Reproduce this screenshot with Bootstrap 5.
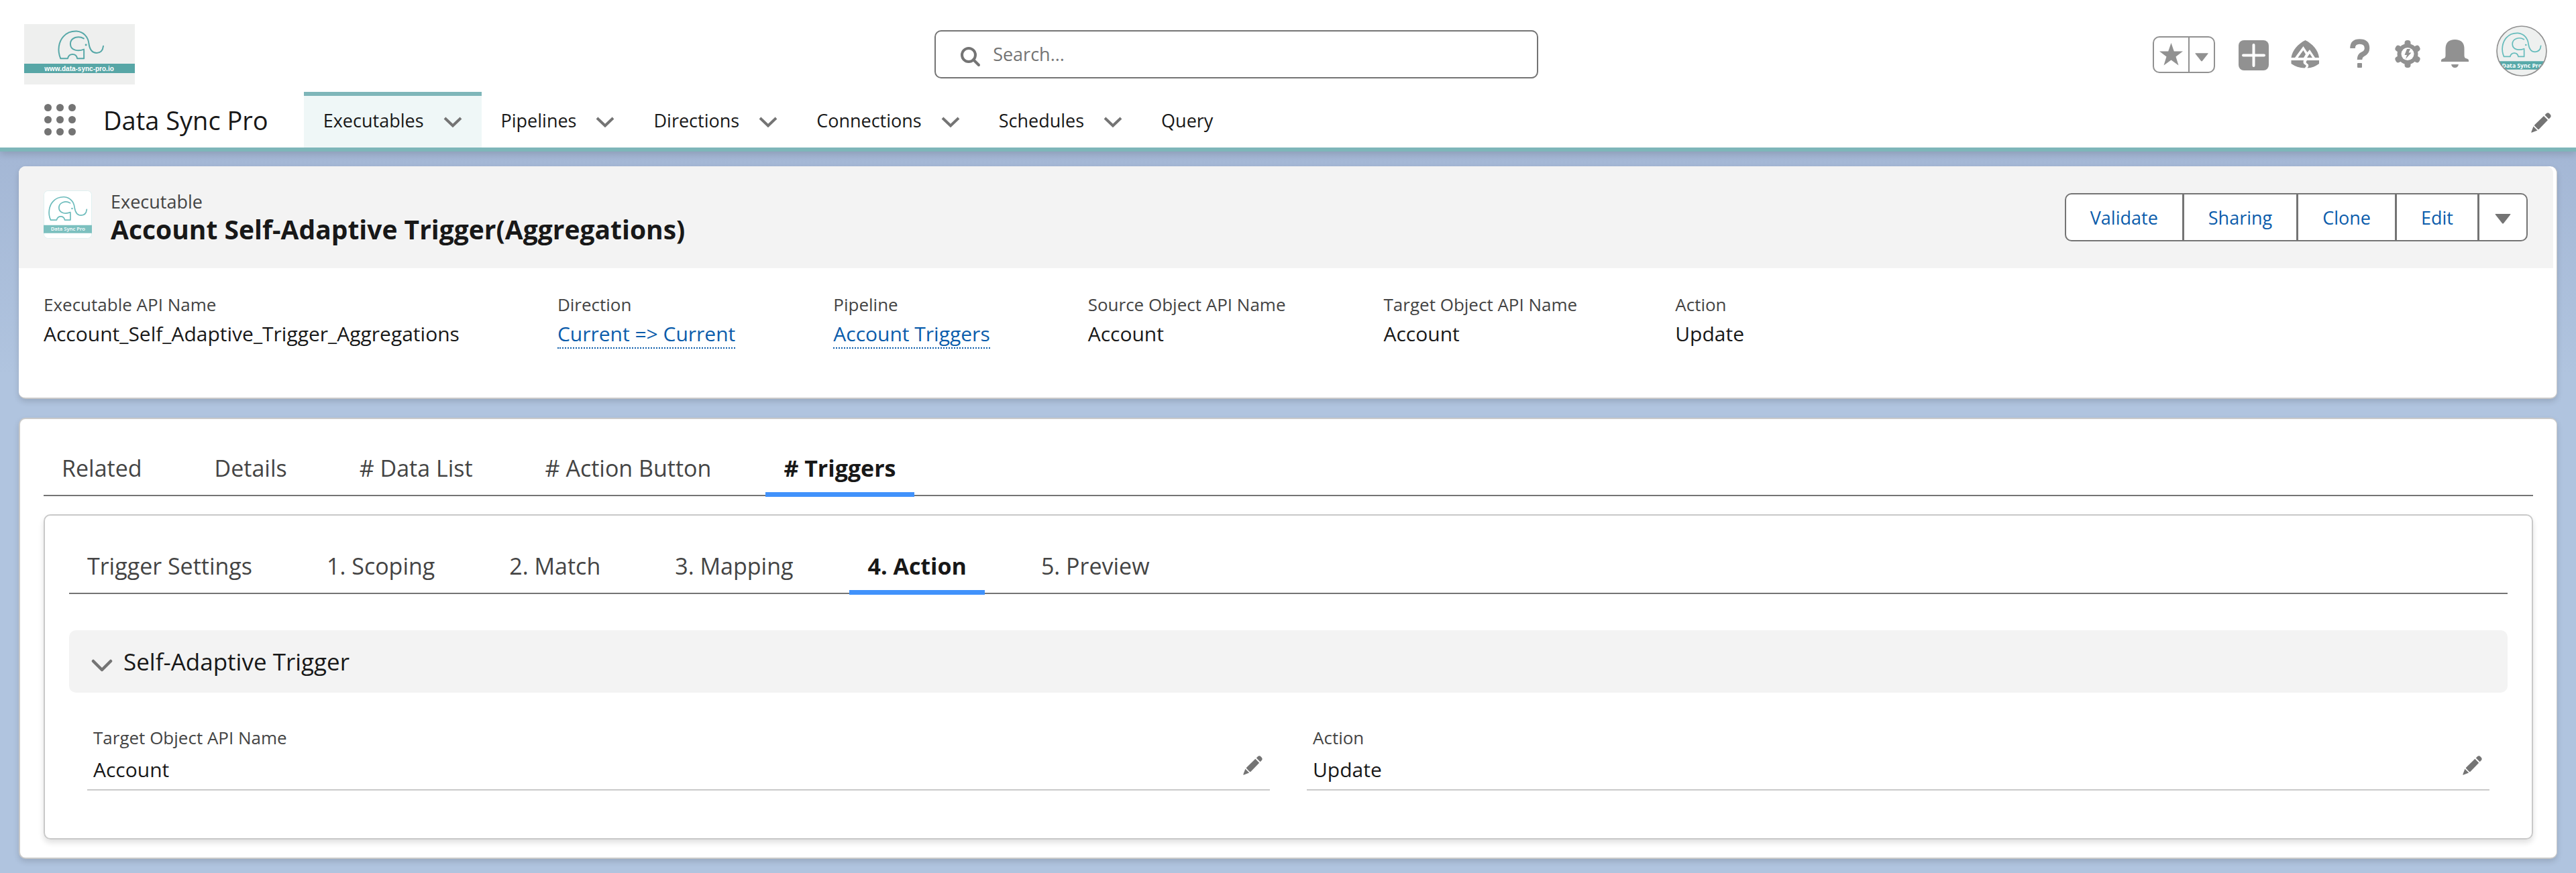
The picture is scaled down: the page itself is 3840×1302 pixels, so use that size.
<!DOCTYPE html>
<html lang="en">
<head>
<meta charset="utf-8">
<meta name="viewport" content="width=device-width, initial-scale=1">
<title>Account Self-Adaptive Trigger(Aggregations) | Data Sync Pro</title>
<link rel="stylesheet" href="https://cdn.jsdelivr.net/npm/bootstrap@5.3.0/dist/css/bootstrap.min.css">
<style>
:root{--ink:#181818;--soft:#444;--grey:#747474;--icon:#919191;--line:#c9c9c9;--teal:#7eb6b9;--link-blue:#0b5cab;--pane:#f3f3f3}
body{font-family:"Open Sans","Noto Sans",sans-serif;font-size:30px;line-height:36px;color:var(--ink);background:linear-gradient(#a4b7d5 226px,#b0c4df 560px) #b0c4df;min-height:100vh}
button{color:inherit}
svg{display:block;flex:none}
.plain{background:none;border:0;padding:0}
/* global header */
.site-head{background:#fff;border-bottom:6px solid var(--teal);box-shadow:0 4px 10px rgba(0,0,0,.14);position:relative}
.head-top{display:grid;grid-template-columns:37fr 900px 41fr;height:137px;padding:25px 43px 0 36px}
.search-box{height:72px;border:2px solid var(--grey);border-radius:10px;padding:0 37px;gap:18px;color:var(--grey)}
.search-box input{border:0;outline:0;background:none;padding:0;font-size:27px;color:var(--ink)}
.search-box input::placeholder{color:var(--grey);opacity:1}
.head-tools{color:var(--icon)}
.fav-group{height:55px;border:2px solid var(--icon);border-radius:10px;margin-right:34px}
.fav-group button{padding:0 8px}
.fav-group button+button{border-left:2px solid var(--icon)}
.avatar{margin:0 0 10px 40px}
.app-bar{height:83px;padding:0 37px 0 66px}
.app-name{font-size:38px;margin:0 53px 0 41px}
.app-item{padding:0 29px;gap:29px;border-top:6px solid transparent;border-bottom:4px solid transparent;font-size:27px}
.app-item a{color:inherit;text-decoration:none}
.app-item.current{background:#eff7f7;border-top-color:var(--teal);border-bottom-color:#eff7f7}
.chev{color:var(--grey)}
/* cards */
.page-body{padding:22px 28px 20px;display:grid;gap:28px}
.panel-card{background:#fff;border:1px solid var(--line);border-width:0 1px 2px 0;border-radius:10px;box-shadow:0 4px 8px rgba(0,0,0,.14)}
.rec-head{background:var(--pane);height:152px;padding:0 38px 0 37px;margin-right:5px;border-radius:10px 10px 0 0}
.rec-title{font-size:39px;line-height:46px;font-weight:700;margin:0}
.rec-kind{font-size:27px;color:var(--soft)}
.rec-icon{margin-bottom:8px}
.rec-actions .btn{font-size:27px;line-height:36px;padding:17px 36px 15px;border:2px solid var(--grey);border-radius:10px;background:#fff;color:var(--link-blue);--bs-btn-hover-color:var(--link-blue)}
.rec-actions .btn:not(:first-child){margin-left:-2px}
.rec-actions .btn:last-child{padding:20px 23px 16px;color:var(--grey)}
.facts{padding:36px 37px 69px;gap:146px}
dl,dt,dd{margin:0;font-weight:400}
dt{font-size:26px;line-height:36px;color:var(--soft)}
dd{line-height:52px}
dd a{color:var(--link-blue);text-decoration:none;border-bottom:2px dotted var(--link-blue)}
/* tabs */
.tab-card{border-width:2px 1px 2px 2px;padding:32px 35px 27px}
.tab-line{border-bottom:2px solid var(--grey);gap:54px}
.tab-line .nav-link{font-size:34px;line-height:48px;color:var(--soft);padding:17px 27px 12px;border:0;border-bottom:7px solid transparent;border-radius:0;margin-bottom:-3px;background:none}
.tab-line .nav-link.active{color:var(--ink);font-weight:700;border-bottom-color:#4192fb}
.inner-box{margin-top:27px;border:2px solid var(--line);border-radius:10px;padding:34px 36px 71px;box-shadow:0 5px 8px rgba(0,0,0,.12)}
.inner-box .tab-line{gap:57px}
.fold{margin-top:54px;height:93px;background:var(--pane);border-radius:10px;padding:0 33px;gap:16px;font-size:35px}
.fold .chev{margin-top:12px}
.detail-grid{padding:49px 27px 0}
.detail-grid .row{--bs-gutter-x:55px}
.detail-item{border-bottom:2px solid var(--line);padding:0 11px 0 9px}
.detail-item dd{line-height:59px}
.detail-item .plain{margin-top:24px}
.pencil{color:var(--grey)}
</style>
</head>
<body>
<svg width="0" height="0" class="position-absolute" aria-hidden="true">
  <symbol id="elephant" viewBox="164 42 214 136">
    <g fill="none" stroke="currentColor" stroke-width="6" stroke-linecap="round" stroke-linejoin="round">
      <path d="M285 134V171H255C250 146 218 146 212 171H180C164 134 172 95 193 72C214 49 238 48 252 48.500C285 51 304 76 307 104C311 132 324 146 342 146C360 146 370 133 372 115"/>
      <path d="M284 81C261 67 224 76 224 106C225 136 260 140 285 130"/>
    </g>
    <circle cx="294" cy="110" r="4.500" fill="currentColor"/>
  </symbol>
  <symbol id="chevron" viewBox="0 0 28 16"><path d="M2 2L14 13.500L26 2" fill="none" stroke="currentColor" stroke-width="4"/></symbol>
  <symbol id="chevron-lg" viewBox="0 0 32 20"><path d="M3 3L16 16L29 3" fill="none" stroke="currentColor" stroke-width="4.500" stroke-linecap="round" stroke-linejoin="round"/></symbol>
  <symbol id="caret" viewBox="0 0 22 14"><path d="M1 0H21Q22 0 21.500 1L12 13Q11 14 10 13L.5 1Q0 0 1 0Z" fill="currentColor"/></symbol>
  <symbol id="pencil" viewBox="0 0 30 30"><path d="M19 5L25 11L12 24.500Q11 25.500 10 24.500L5.500 20Q4.500 19 5.500 18ZM20.500 3.500L23 1Q25.500-.5 27.500 1.500L28.500 2.500Q30.500 4.500 29 7L26.500 9.500ZM3.500 20.500L9.500 26.500L1.500 29.500Q0 30 .5 28.500Z" fill="currentColor"/></symbol>
</svg>

<header class="site-head">
  <div class="head-top align-items-center">
    <a href="#" aria-label="Data Sync Pro home">
      <svg width="165" height="90" viewBox="0 0 165 90"><rect width="165" height="90" fill="#eeefee"/><use href="#elephant" x="49" y="8" width="71" height="46" color="#57a8a8"/><rect y="59" width="165" height="14" fill="#57a6a6"/><text x="82" y="70" text-anchor="middle" font-family="Liberation Sans, sans-serif" font-size="10" font-weight="700" fill="#fff">www.data-sync-pro.io</text></svg>
    </a>
    <label class="search-box d-flex align-items-center">
      <svg width="30" height="30" viewBox="0 0 30 30" class="mt-2" aria-hidden="true"><circle cx="12" cy="12" r="10" fill="none" stroke="currentColor" stroke-width="4"/><path d="M19 19L27 27" stroke="currentColor" stroke-width="4" stroke-linecap="round"/></svg>
      <input type="search" class="flex-grow-1" placeholder="Search..." aria-label="Search">
    </label>
    <div class="head-tools d-flex align-items-center justify-content-end">
      <div class="fav-group d-flex">
        <button class="plain" aria-label="Favorite"><svg width="35" height="34" viewBox="0 0 35 34"><path d="M17.500 0L21.800 12.500H35L24.500 20.500L28.500 33.500L17.500 25.500L6.500 33.500L10.500 20.500L0 12.500H13.200Z" fill="currentColor"/></svg></button>
        <button class="plain pt-2" aria-label="Favorites list"><svg width="20" height="13"><use href="#caret"/></svg></button>
      </div>
      <button class="plain" aria-label="Create"><svg width="47" height="52" viewBox="0 0 47 52"><rect x="1" y="5" width="45" height="45" rx="8" fill="currentColor"/><path d="M23.500 12V43M8 27.500H39" stroke="#fff" stroke-width="4" stroke-linecap="round"/></svg></button>
      <button class="plain ms-3 ps-3" aria-label="Guidance"><svg width="43" height="52" viewBox="0 0 43 52"><path d="M21.500 5C32 10 41 20 42 31H36L28 19L24.500 23L18.500 14L6 31H0.500C2 20 11 10 21.500 5ZM18.500 20L22 26L19 31H10.500ZM28 25L32 31H24ZM0.500 35H19Q17 40 22 42Q24 43 20.500 46.500Q9 46 0.500 40ZM24 35H42V40Q34 46 24.500 46.500Q28 42 24.500 40Q21 38 24 35Z" fill="currentColor"/></svg></button>
      <button class="plain ms-3 ps-4" aria-label="Help"><svg width="38" height="52" viewBox="0 0 38 52"><path d="M9 17Q9 7 19.500 7Q30.500 7 30.500 17Q30.500 23 24 26Q19.500 28 19.500 34" fill="none" stroke="currentColor" stroke-width="7.500"/><rect x="16" y="39" width="7" height="7" rx="1" fill="currentColor"/></svg></button>
      <button class="plain ms-3 ps-3" aria-label="Setup"><svg width="42" height="52" viewBox="0 0 42 52"><g fill="currentColor"><circle cx="21" cy="25.500" r="15.500"/><rect x="16.500" y="5" width="9" height="41" rx="4"/><rect x="16.500" y="5" width="9" height="41" rx="4" transform="rotate(60 21 25.500)"/><rect x="16.500" y="5" width="9" height="41" rx="4" transform="rotate(120 21 25.500)"/></g><circle cx="21" cy="25.500" r="9.500" fill="#fff"/><path d="M20 18H25L22.500 23.500H26.500L18 33L20 27H16.500Z" fill="currentColor"/></svg></button>
      <button class="plain ms-4 ps-1" aria-label="Notifications"><svg width="43" height="52" viewBox="0 0 43 52"><path d="M1 37V35Q1 33 3.500 32.500Q7.500 32 7.500 28V18Q7.500 4 21.500 4Q35.500 4 35.500 18V28Q35.500 32 39.500 32.500Q42 33 42 35V37ZM16 41H27Q26 46 21.500 46Q17 46 16 41Z" fill="currentColor"/></svg></button>
      <button class="plain avatar" aria-label="View profile"><svg width="76" height="76" viewBox="693 23 228 228"><defs><clipPath id="disc"><circle cx="807" cy="137" r="111"/></clipPath></defs><g clip-path="url(#disc)"><path d="M693 23h228v228h-228z" fill="#eef0ef"/><use href="#elephant" x="714" y="50" width="184" height="120" color="#66bcbc"/><path d="M693 183h228v37h-228z" fill="#57a9a9"/><text x="808" y="211" text-anchor="middle" font-size="26" font-weight="700" fill="#fff">Data Sync Pro</text></g><circle cx="807" cy="137" r="111" fill="none" stroke="#919191" stroke-width="5"/></svg></button>
    </div>
  </div>
  <nav class="app-bar d-flex align-items-stretch" aria-label="App">
    <button class="plain" aria-label="App launcher"><svg width="47" height="47" viewBox="0 0 47 47" fill="#747474"><circle cx="5.500" cy="5.500" r="5.500"/><circle cx="23.500" cy="5.500" r="5.500"/><circle cx="41.500" cy="5.500" r="5.500"/><circle cx="5.500" cy="23.500" r="5.500"/><circle cx="23.500" cy="23.500" r="5.500"/><circle cx="41.500" cy="23.500" r="5.500"/><circle cx="5.500" cy="41.500" r="5.500"/><circle cx="23.500" cy="41.500" r="5.500"/><circle cx="41.500" cy="41.500" r="5.500"/></svg></button>
    <span class="app-name align-self-center">Data Sync Pro</span>
    <div class="app-item current d-flex align-items-center"><a href="#" aria-current="page">Executables</a><button class="plain chev pt-1" aria-label="Executables list"><svg width="28" height="16"><use href="#chevron"/></svg></button></div>
    <div class="app-item d-flex align-items-center"><a href="#">Pipelines</a><button class="plain chev pt-1" aria-label="Pipelines list"><svg width="28" height="16"><use href="#chevron"/></svg></button></div>
    <div class="app-item d-flex align-items-center"><a href="#">Directions</a><button class="plain chev pt-1" aria-label="Directions list"><svg width="28" height="16"><use href="#chevron"/></svg></button></div>
    <div class="app-item d-flex align-items-center"><a href="#">Connections</a><button class="plain chev pt-1" aria-label="Connections list"><svg width="28" height="16"><use href="#chevron"/></svg></button></div>
    <div class="app-item d-flex align-items-center"><a href="#">Schedules</a><button class="plain chev pt-1" aria-label="Schedules list"><svg width="28" height="16"><use href="#chevron"/></svg></button></div>
    <div class="app-item d-flex align-items-center"><a href="#">Query</a></div>
    <button class="plain pencil ms-auto pt-2" aria-label="Edit navigation"><svg width="30" height="30"><use href="#pencil"/></svg></button>
  </nav>
</header>

<main class="page-body">
  <section class="panel-card">
    <div class="rec-head d-flex align-items-center">
      <svg class="rec-icon me-4" width="72" height="72" viewBox="12 12 216 216" aria-hidden="true"><rect x="13.500" y="13.500" width="213" height="213" rx="18" fill="#fff" stroke="#dff0f0" stroke-width="3"/><use href="#elephant" x="30" y="34" width="180" height="118" color="#6dbcbc"/><path d="M12 167h216v36h-216z" fill="#7cc0bf"/><text x="121" y="193" text-anchor="middle" font-size="23" font-weight="600" fill="#fff">Data Sync Pro</text></svg>
      <div class="ps-1">
        <div class="rec-kind">Executable</div>
        <h1 class="rec-title">Account Self-Adaptive Trigger(Aggregations)</h1>
      </div>
      <div class="rec-actions btn-group ms-auto">
        <button class="btn">Validate</button>
        <button class="btn">Sharing</button>
        <button class="btn">Clone</button>
        <button class="btn">Edit</button>
        <button class="btn" aria-label="More actions"><svg width="24" height="15"><use href="#caret"/></svg></button>
      </div>
    </div>
    <div class="facts d-flex">
      <dl><dt>Executable API Name</dt><dd>Account_Self_Adaptive_Trigger_Aggregations</dd></dl>
      <dl><dt>Direction</dt><dd><a href="#">Current =&gt; Current</a></dd></dl>
      <dl><dt>Pipeline</dt><dd><a href="#">Account Triggers</a></dd></dl>
      <dl><dt>Source Object API Name</dt><dd>Account</dd></dl>
      <dl><dt>Target Object API Name</dt><dd>Account</dd></dl>
      <dl><dt>Action</dt><dd>Update</dd></dl>
    </div>
  </section>

  <section class="panel-card tab-card">
    <div class="nav tab-line" role="tablist">
      <button class="nav-link" role="tab">Related</button>
      <button class="nav-link" role="tab">Details</button>
      <button class="nav-link" role="tab"># Data List</button>
      <button class="nav-link" role="tab"># Action Button</button>
      <button class="nav-link active" role="tab" aria-selected="true"># Triggers</button>
    </div>
    <div class="inner-box">
      <div class="nav tab-line" role="tablist">
        <button class="nav-link" role="tab">Trigger Settings</button>
        <button class="nav-link" role="tab">1. Scoping</button>
        <button class="nav-link" role="tab">2. Match</button>
        <button class="nav-link" role="tab">3. Mapping</button>
        <button class="nav-link active" role="tab" aria-selected="true">4. Action</button>
        <button class="nav-link" role="tab">5. Preview</button>
      </div>
      <button class="plain fold d-flex align-items-center w-100" aria-expanded="true">
        <svg class="chev" width="32" height="20"><use href="#chevron-lg"/></svg>Self-Adaptive Trigger
      </button>
      <div class="detail-grid">
        <div class="row">
          <div class="col-6"><div class="detail-item d-flex justify-content-between"><dl><dt>Target Object API Name</dt><dd>Account</dd></dl><button class="plain pencil align-self-center" aria-label="Edit Target Object API Name"><svg width="29" height="29"><use href="#pencil"/></svg></button></div></div>
          <div class="col-6"><div class="detail-item d-flex justify-content-between"><dl><dt>Action</dt><dd>Update</dd></dl><button class="plain pencil align-self-center" aria-label="Edit Action"><svg width="29" height="29"><use href="#pencil"/></svg></button></div></div>
        </div>
      </div>
    </div>
  </section>
</main>
<script src="https://cdn.jsdelivr.net/npm/bootstrap@5.3.0/dist/js/bootstrap.bundle.min.js"></script>
</body>
</html>
